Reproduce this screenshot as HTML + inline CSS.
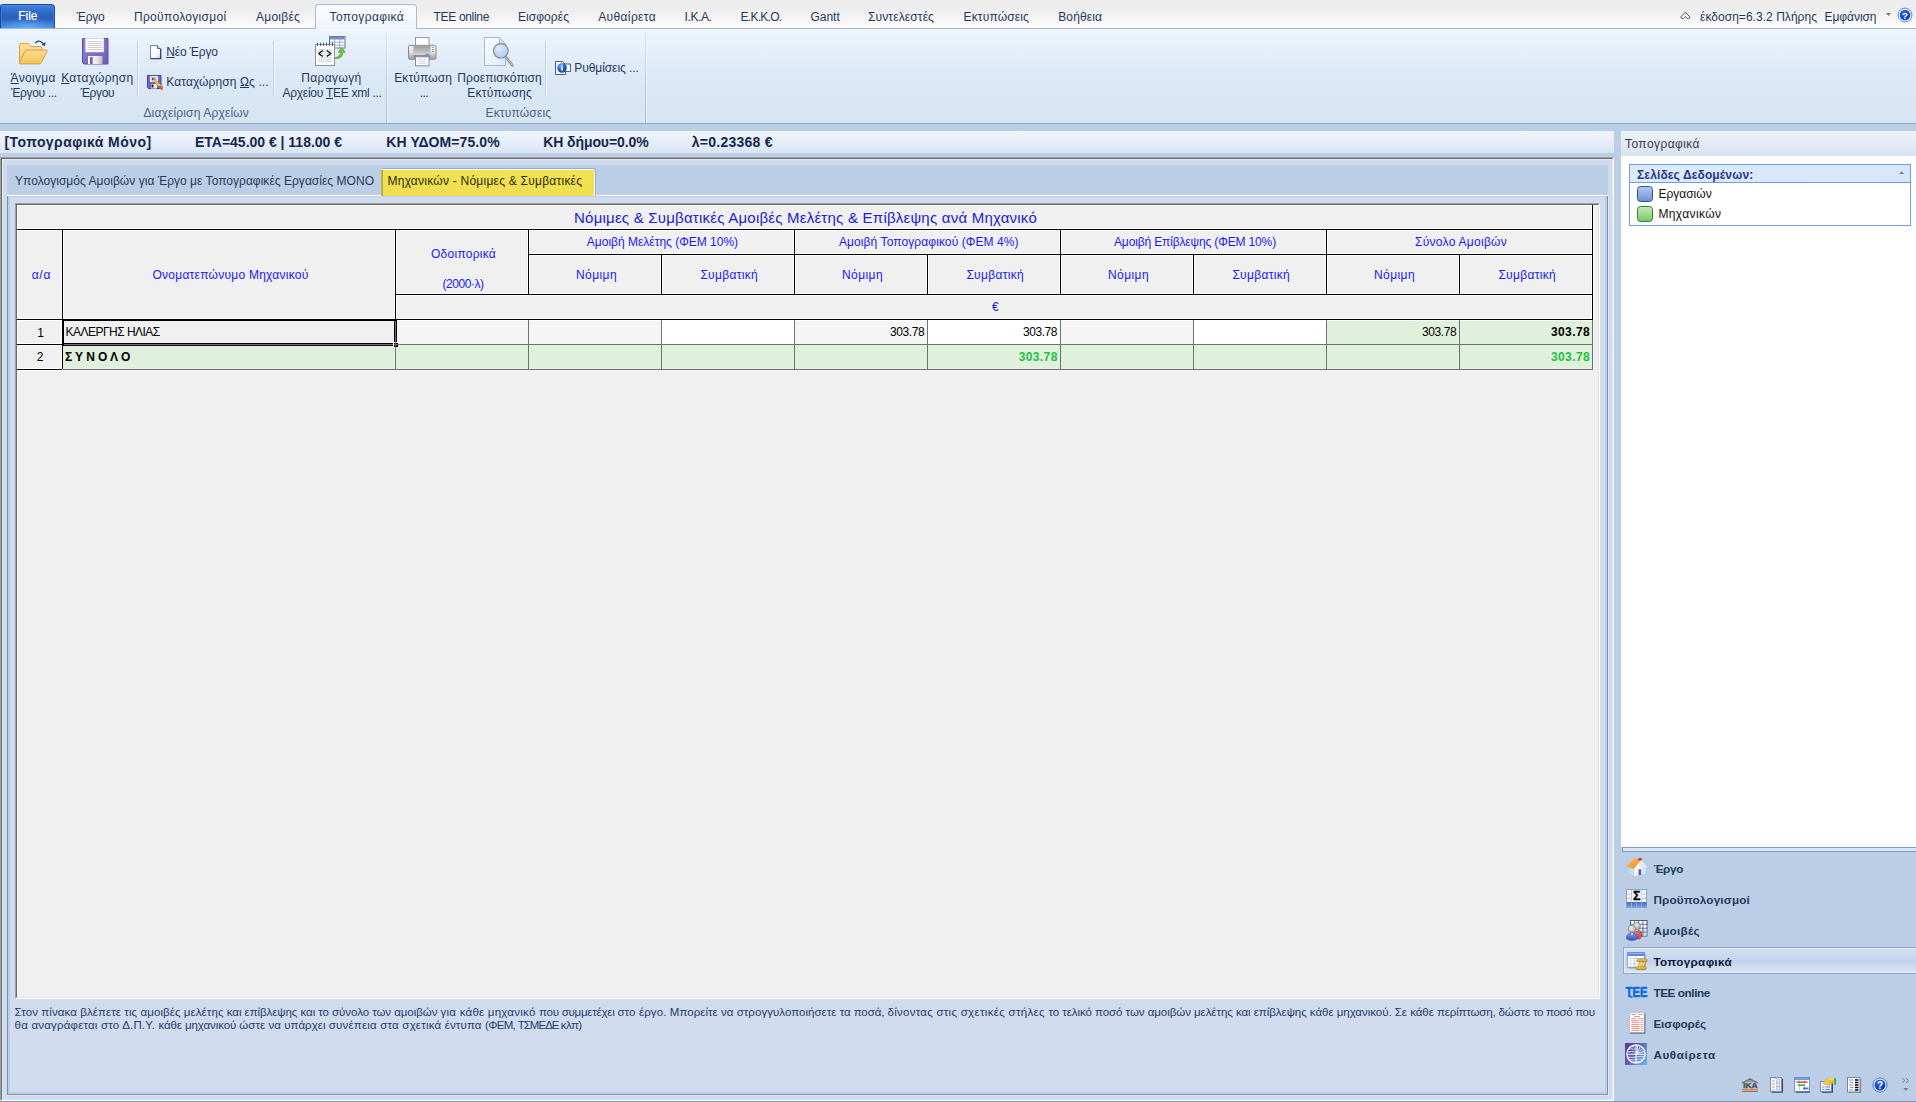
<!DOCTYPE html>
<html lang="el"><head><meta charset="utf-8"><title>Τοπογραφικά</title>
<style>

html,body{margin:0;padding:0;background:#bbcee6;}
body{width:1916px;height:1102px;overflow:hidden;font-family:"Liberation Sans",sans-serif;}
#app{position:relative;width:1916px;height:1102px;overflow:hidden;background:#bbcee6;}
#app div,#app svg{position:absolute;box-sizing:border-box;}
.t{position:absolute;white-space:pre;line-height:20px;height:20px;display:block;}
u{text-decoration:underline;text-underline-offset:1px;}
</style></head>
<body>
<div id="app">
<div style="left:0px;top:0px;width:1916px;height:28px;background:linear-gradient(#ededed 0,#eeeeee 40%,#f4f4f4 62%,#fafafa 92%,#ffffff 100%);"></div>
<div style="left:0px;top:28px;width:1916px;height:1px;background:#a0b4cf;"></div>
<div style="left:0px;top:29px;width:1916px;height:94px;background:linear-gradient(#f4f9ff 0,#edf4fd 1.5%,#e3edf9 30%,#dae7f5 58%,#d7e4f2 100%);"></div>
<div style="left:0px;top:123px;width:1916px;height:1px;background:#8fa6c5;"></div>
<div style="left:0px;top:124px;width:1916px;height:7px;background:#bbcee6;"></div>
<div style="left:0px;top:4px;width:55px;height:24px;border-radius:3px 4px 0 0;border:1px solid #1c48a8;border-bottom:none;background:radial-gradient(ellipse 70% 45% at 50% 100%,rgba(110,190,255,.75),rgba(110,190,255,0) 100%),linear-gradient(#4a8ee8 0,#3f7ddb 6%,#3170cf 25%,#2b62bb 45%,#2a60b8 62%,#3274d4 85%,#3c86e4 100%);box-shadow:inset 1px 0 0 #3f7fdc,inset -1px 0 0 #3f7fdc;"></div>
<div style="left:315px;top:4px;width:102px;height:25px;border-radius:4px 4px 0 0;border:1px solid #a7bbd6;border-bottom:none;background:linear-gradient(#fbfcfe 0,#f0f5fc 100%);"></div>
<div style="left:316px;top:28px;width:100px;height:1px;background:#eef3fb;"></div>
<div style="left:137px;top:41px;width:1px;height:55px;background:#c3d0e2;"></div>
<div style="left:138px;top:41px;width:1px;height:55px;background:#f3f7fc;"></div>
<div style="left:273px;top:41px;width:1px;height:55px;background:#c3d0e2;"></div>
<div style="left:274px;top:41px;width:1px;height:55px;background:#f3f7fc;"></div>
<div style="left:545px;top:41px;width:1px;height:55px;background:#c3d0e2;"></div>
<div style="left:546px;top:41px;width:1px;height:55px;background:#f3f7fc;"></div>
<div style="left:386px;top:31px;width:1px;height:92px;background:linear-gradient(#dfe8f4 0,#b6c6dc 60%,#aebfd8 100%);"></div>
<div style="left:387px;top:31px;width:1px;height:92px;background:linear-gradient(#f4f8fd 0,#eaf0f9 100%);"></div>
<div style="left:645px;top:31px;width:1px;height:92px;background:linear-gradient(#dfe8f4 0,#b6c6dc 60%,#aebfd8 100%);"></div>
<div style="left:646px;top:31px;width:1px;height:92px;background:linear-gradient(#f4f8fd 0,#eaf0f9 100%);"></div>
<div style="left:0px;top:131px;width:1614px;height:22px;background:linear-gradient(#eff5fd 0,#e7eff9 45%,#dae5f3 100%);"></div>
<div style="left:0px;top:157px;width:1614px;height:944px;background:#d0dcee;border:1px solid;border-color:#a0a0a0 #fff #fff #a0a0a0;"></div>
<div style="left:1px;top:158px;width:1612px;height:942px;border:1px solid;border-color:#696969 #e3e3e3 #e3e3e3 #696969;"></div>
<div style="left:2px;top:159px;width:1610px;height:1px;background:#dde8f8;"></div>
<div style="left:2px;top:159px;width:1px;height:940px;background:#dde8f8;"></div>
<div style="left:0px;top:1101px;width:1916px;height:1px;background:#7b95b9;"></div>
<div style="left:7px;top:165px;width:1601px;height:30px;background:#bbcee6;"></div>
<div style="left:7px;top:195px;width:1601px;height:1px;background:#fff;"></div>
<div style="left:7px;top:196px;width:1601px;height:899px;background:#d0dcee;border:1px solid #7590b5;border-top:none;box-shadow:inset 2px 0 0 #bbcee6,inset -2px 0 0 #bbcee6,inset 0 -2px 0 #bbcee6,inset 0 1px 0 #bbcee6;"></div>
<div style="left:1608px;top:196px;width:1px;height:900px;background:#dde7f5;"></div>
<div style="left:7px;top:1095px;width:1602px;height:1px;background:#dde7f5;"></div>
<div style="left:383px;top:168px;width:213px;height:28px;background:#fff;border:1px solid #98adca;border-left:none;border-bottom:none;border-radius:0 3px 0 0;"></div>
<div style="left:381px;top:170px;width:213px;height:26px;background:linear-gradient(#f2e252 0,#efdf50 100%);"></div>
<div style="left:381px;top:170px;width:2px;height:26px;background:linear-gradient(90deg,#cfc544,#a8a037);"></div>
<div style="left:381px;top:169px;width:2px;height:1px;background:#d8d6a0;"></div>
<div style="left:15px;top:203px;width:1585px;height:796px;background:#f0f0f0;border:1px solid;border-color:#a0a0a0 #fff #fff #a0a0a0;"></div>
<div style="left:16px;top:204px;width:1583px;height:794px;border:1px solid;border-color:#696969 #e3e3e3 #e3e3e3 #696969;"></div>
<div style="left:17px;top:205px;width:1581px;height:1px;background:#fff;"></div>
<div style="left:17px;top:205px;width:1px;height:792px;background:#fff;"></div>
<div style="left:396px;top:320px;width:1197px;height:24px;background:#f5f5f5;"></div>
<div style="left:662px;top:320px;width:132px;height:24px;background:#fff;"></div>
<div style="left:928px;top:320px;width:132px;height:24px;background:#fff;"></div>
<div style="left:1194px;top:320px;width:132px;height:24px;background:#fff;"></div>
<div style="left:1327px;top:320px;width:265px;height:24px;background:#dff0dc;"></div>
<div style="left:63px;top:345px;width:1529px;height:24px;background:#dff0dc;"></div>
<div style="left:17px;top:228px;width:1576px;height:3px;background:#fff;"></div>
<div style="left:528px;top:253px;width:1065px;height:3px;background:#fff;"></div>
<div style="left:395px;top:293px;width:1198px;height:3px;background:#fff;"></div>
<div style="left:17px;top:318px;width:1576px;height:3px;background:#fff;"></div>
<div style="left:61px;top:229px;width:3px;height:140px;background:#fff;"></div>
<div style="left:394px;top:229px;width:3px;height:91px;background:#fff;"></div>
<div style="left:1591px;top:205px;width:3px;height:115px;background:#fff;"></div>
<div style="left:527px;top:229px;width:3px;height:65px;background:#fff;"></div>
<div style="left:793px;top:229px;width:3px;height:65px;background:#fff;"></div>
<div style="left:1059px;top:229px;width:3px;height:65px;background:#fff;"></div>
<div style="left:1325px;top:229px;width:3px;height:65px;background:#fff;"></div>
<div style="left:660px;top:254px;width:3px;height:40px;background:#fff;"></div>
<div style="left:926px;top:254px;width:3px;height:40px;background:#fff;"></div>
<div style="left:1192px;top:254px;width:3px;height:40px;background:#fff;"></div>
<div style="left:1458px;top:254px;width:3px;height:40px;background:#fff;"></div>
<div style="left:17px;top:343px;width:45px;height:3px;background:#fff;"></div>
<div style="left:17px;top:368px;width:45px;height:3px;background:#fff;"></div>
<div style="left:17px;top:229px;width:1576px;height:1px;background:#000;"></div>
<div style="left:528px;top:254px;width:1065px;height:1px;background:#000;"></div>
<div style="left:395px;top:294px;width:1198px;height:1px;background:#000;"></div>
<div style="left:17px;top:319px;width:1576px;height:1px;background:#000;"></div>
<div style="left:62px;top:229px;width:1px;height:140px;background:#000;"></div>
<div style="left:395px;top:229px;width:1px;height:91px;background:#000;"></div>
<div style="left:1592px;top:205px;width:1px;height:115px;background:#000;"></div>
<div style="left:528px;top:229px;width:1px;height:65px;background:#000;"></div>
<div style="left:794px;top:229px;width:1px;height:65px;background:#000;"></div>
<div style="left:1060px;top:229px;width:1px;height:65px;background:#000;"></div>
<div style="left:1326px;top:229px;width:1px;height:65px;background:#000;"></div>
<div style="left:661px;top:254px;width:1px;height:40px;background:#000;"></div>
<div style="left:927px;top:254px;width:1px;height:40px;background:#000;"></div>
<div style="left:1193px;top:254px;width:1px;height:40px;background:#000;"></div>
<div style="left:1459px;top:254px;width:1px;height:40px;background:#000;"></div>
<div style="left:17px;top:344px;width:45px;height:1px;background:#000;"></div>
<div style="left:17px;top:369px;width:45px;height:1px;background:#000;"></div>
<div style="left:63px;top:344px;width:1530px;height:1px;background:#727272;"></div>
<div style="left:63px;top:369px;width:1530px;height:1px;background:#727272;"></div>
<div style="left:395px;top:320px;width:1px;height:50px;background:#727272;"></div>
<div style="left:528px;top:320px;width:1px;height:50px;background:#727272;"></div>
<div style="left:661px;top:320px;width:1px;height:50px;background:#727272;"></div>
<div style="left:794px;top:320px;width:1px;height:50px;background:#727272;"></div>
<div style="left:927px;top:320px;width:1px;height:50px;background:#727272;"></div>
<div style="left:1060px;top:320px;width:1px;height:50px;background:#727272;"></div>
<div style="left:1193px;top:320px;width:1px;height:50px;background:#727272;"></div>
<div style="left:1326px;top:320px;width:1px;height:50px;background:#727272;"></div>
<div style="left:1459px;top:320px;width:1px;height:50px;background:#727272;"></div>
<div style="left:1592px;top:320px;width:1px;height:50px;background:#727272;"></div>
<div style="left:62px;top:319px;width:335px;height:2px;background:#000;"></div>
<div style="left:62px;top:319px;width:2px;height:27px;background:#000;"></div>
<div style="left:63px;top:346px;width:1px;height:23px;background:#dff0dc;"></div>
<div style="left:394px;top:321px;width:1px;height:21px;background:#000;"></div>
<div style="left:396px;top:321px;width:1px;height:21px;background:#000;"></div>
<div style="left:64px;top:343px;width:329px;height:1px;background:#000;"></div>
<div style="left:64px;top:345px;width:329px;height:1px;background:#1a0a1a;"></div>
<div style="left:394px;top:343px;width:4px;height:4px;background:#000;"></div>
<div style="left:395px;top:343px;width:1px;height:4px;background:#6a6a6a;"></div>
<div style="left:394px;top:344px;width:4px;height:1px;background:#6a6a6a;"></div>
<div style="left:393px;top:342px;width:1px;height:4px;background:#f4f4f4;"></div>
<div style="left:1621px;top:131px;width:295px;height:25px;background:linear-gradient(#ecf2fb 0,#e2eaf6 50%,#d8e3f2 100%);"></div>
<div style="left:1621px;top:156px;width:295px;height:691px;background:#fff;"></div>
<div style="left:1629px;top:164px;width:282px;height:62px;border:1px solid #6f9de0;background:#fff;"></div>
<div style="left:1630px;top:165px;width:280px;height:18px;background:linear-gradient(90deg,#deeafc 0,#d7e6fc 100%);border-bottom:1px solid #6f9de0;"></div>
<div style="left:1637px;top:186px;width:16px;height:16px;border-radius:3.5px;border:1px solid #2c4f9c;background:linear-gradient(#b3c6ec 0,#6e92d6 100%);"></div>
<div style="left:1637px;top:206px;width:16px;height:16px;border-radius:3.5px;border:1px solid #357f31;background:linear-gradient(#c4e8bc 0,#79c96f 100%);"></div>
<div style="left:1622px;top:847px;width:295px;height:5px;background:#d6e5f8;border:1px solid #7f9bc4;border-right:none;"></div>
<div style="left:1621px;top:852px;width:295px;height:249px;background:#bbcee6;"></div>
<div style="left:1623px;top:947px;width:295px;height:27px;border:1px solid #8ea9cf;border-right:none;background:linear-gradient(#d3e0f2 0,#c6d6ec 45%,#c0d1e8 50%,#dbe6f4 100%);box-shadow:inset 0 0 0 1px #e4ecf8;"></div>
<svg style="left:14px;top:36px" width="38" height="32" viewBox="14 36 38 32"><defs><linearGradient id="fo1" x1="0" y1="0" x2="0" y2="1"><stop offset="0" stop-color="#fbe59a"/><stop offset="1" stop-color="#f3c95f"/></linearGradient>
<linearGradient id="fo2" x1="0" y1="0" x2="0" y2="1"><stop offset="0" stop-color="#fddc8e"/><stop offset="1" stop-color="#f6c558"/></linearGradient></defs>
<path d="M19.5 62.5V45.2q0-1.7 1.7-1.7h7.3l2.2 3h9.6q1.7 0 1.7 1.7v3.3" fill="url(#fo1)" stroke="#d9a04a"/>
<path d="M19.3 62.6l5.6-11.4q.6-1.2 2-1.2h19.4q1.4 0 .8 1.3l-6 11.6q-.5 1-1.8 1H20.300q-1.600 0-1-1.300z" fill="url(#fo2)" stroke="#dc9a3c"/>
<path d="M35.2 43.3q2.600-3.400 6.200-1.200 2.100 1.300 2.700 3.200" fill="none" stroke="#2f4569" stroke-width="1.2"/>
<path d="M41.4 44.700l3.600 1.400.6-4.100z" fill="#2f4569"/>
</svg>
<svg style="left:80px;top:36px" width="32" height="32" viewBox="80 36 32 32"><defs><linearGradient id="fl1" x1="0" y1="0" x2="1" y2="1"><stop offset="0" stop-color="#8f82cc"/><stop offset="1" stop-color="#6e5fb6"/></linearGradient>
<linearGradient id="fl2" x1="0" y1="0" x2="1" y2="0"><stop offset="0" stop-color="#fff"/><stop offset=".6" stop-color="#e9e9e9"/><stop offset="1" stop-color="#bdbdbd"/></linearGradient></defs>
<path d="M82.500 38.500h25.500v25.500h-24l-1.500-1.500z" fill="url(#fl1)" stroke="#5d4fa3"/>
<rect x="85.500" y="38.300" width="18.300" height="13.700" fill="#fff" stroke="#d8d4ea" stroke-width=".6"/>
<path d="M87.500 41.500h15M87.500 43.500h15M87.500 45.500h15M87.500 47.500h15M87.500 49.500h15" stroke="#c9c9c9" stroke-width=".9"/>
<rect x="88" y="56" width="14.500" height="8" fill="url(#fl2)"/>
<rect x="90" y="57" width="2.600" height="7" fill="#6f5fb5"/>
<rect x="105.600" y="40" width="1" height="1.500" fill="#5d4fa3"/>
</svg>
<svg style="left:148px;top:43px" width="16" height="18" viewBox="148 43 16 18"><defs><linearGradient id="nd1" x1="0" y1="0" x2="1" y2="1"><stop offset="0" stop-color="#fff"/><stop offset=".6" stop-color="#fbfcff"/><stop offset="1" stop-color="#c9d2e4"/></linearGradient></defs>
<path d="M150.500 45.500h7l3 3v10h-10z" fill="url(#nd1)" stroke="#5d6b88" stroke-width=".8"/>
<path d="M157.500 45.500v3h3" fill="#e8ecf4" stroke="#33466c" stroke-width=".8"/>
<path d="M150.600 58.700h10.200v-9.700" fill="none" stroke="#26375c" stroke-width="1.100"/>
</svg>
<svg style="left:145px;top:73px" width="20" height="18" viewBox="145 73 20 18">
<path d="M147.500 75.500h13.500v13h-12.500l-1-1z" fill="#6b63d6" stroke="#4a43a8"/>
<rect x="150" y="76" width="8" height="6" fill="#fff"/>
<path d="M151 77.500h6M151 79.500h6" stroke="#999" stroke-width=".8"/>
<rect x="151" y="84" width="6" height="4.500" fill="#e8e8e8"/>
<rect x="151.500" y="84.500" width="2" height="3" fill="#222"/>
<path d="M152.500 80.200l2-1.600 8.600 8.400-1.800 1.900z" fill="#e9c74a" stroke="#8a6a20" stroke-width=".5"/>
<path d="M160.300 85.600l2.600 2.500q.6.900-.4 1.400-1 .5-1.700-.1l-2.300-2.300z" fill="#d4533c"/>
<path d="M152.500 80.200l2-1.600-2.700-.700z" fill="#333"/>
</svg>
<svg style="left:313px;top:34px" width="36" height="34" viewBox="313 34 36 34">
<rect x="329.500" y="36.500" width="15.500" height="11.500" fill="#fff" stroke="#6678a8"/>
<rect x="330" y="37" width="14.500" height="2.500" fill="#6f8fd0"/>
<path d="M334.700 37v11M339.800 37v11M330 42.300h15M330 45.200h15" stroke="#8c9ac0" stroke-width=".8"/>
<rect x="315.500" y="44.500" width="19" height="21" fill="#fff" stroke="#8793ad"/>
<path d="M318 49.500h14M318 51.500h14M318 53.500h14M318 55.500h14M318 57.500h14M318 59.500h14M318 61.500h14" stroke="#c7cfe0" stroke-width=".8"/>
<path d="M317.500 42.800v3M320.500 42.800v3M323.500 42.800v3M326.500 42.800v3M329.500 42.800v3M332.500 42.800v3" stroke="#444" stroke-width=".9"/>
<path d="M322.800 50.600l-4 3 4 3M326.800 50.600l4 3-4 3" fill="none" stroke="#111" stroke-width="1.300"/>
<path d="M335.200 57.500q4.800-.3 5.300-5.200l-2.400 0 3.600-4.800 3.600 4.800-2.300 0q-.4 6.900-7.800 6.300z" fill="#6cc63a" stroke="#4a9a22" stroke-width=".6"/>
</svg>
<svg style="left:406px;top:35px" width="34" height="34" viewBox="406 35 34 34"><defs><linearGradient id="pr1" x1="0" y1="0" x2="0" y2="1"><stop offset="0" stop-color="#f4f4f4"/><stop offset=".55" stop-color="#dcdcdc"/><stop offset="1" stop-color="#9c9c9c"/></linearGradient>
<linearGradient id="pr2" x1="0" y1="0" x2="0" y2="1"><stop offset="0" stop-color="#9e9e9e"/><stop offset="1" stop-color="#d4d4d4"/></linearGradient></defs>
<rect x="415.500" y="37.500" width="13.500" height="9" fill="#fff" stroke="#8d9bb5"/>
<rect x="408.500" y="45.300" width="27.500" height="14" rx="1.500" fill="url(#pr1)" stroke="#8a8a8a"/>
<rect x="413.500" y="46" width="17" height="9" fill="url(#pr2)"/>
<rect x="413.500" y="55" width="17" height="2.500" fill="#8f8f8f"/>
<rect x="425" y="53.800" width="4" height="1.200" fill="#4da0ff"/>
<path d="M432 47.500h2M432 49.500h2M432 51.500h2" stroke="#9a9a9a" stroke-width=".8"/>
<rect x="415.500" y="56.800" width="13.500" height="9" fill="#fff" stroke="#7f8eac"/>
<path d="M418 59.500h8.500M418 61.500h8.500M418 63.500h8.500" stroke="#c8cfdd" stroke-width=".8"/>
</svg>
<svg style="left:482px;top:35px" width="34" height="34" viewBox="482 35 34 34"><defs><linearGradient id="pv1" x1="0" y1="0" x2="1" y2="1"><stop offset="0" stop-color="#fdfeff"/><stop offset="1" stop-color="#dde8f8"/></linearGradient>
<radialGradient id="pv2" cx=".4" cy=".35" r=".7"><stop offset="0" stop-color="#dcebfd"/><stop offset="1" stop-color="#a9cbf3"/></radialGradient></defs>
<path d="M484.500 37.500h15l6 6v22h-21z" fill="url(#pv1)" stroke="#a8b6cf"/>
<path d="M499.500 37.500v6h6z" fill="#cfdff6" stroke="#a8b6cf" stroke-width=".8"/>
<path d="M505 56l7.500 9.500" stroke="#8a8a8a" stroke-width="2.600" stroke-linecap="round"/>
<path d="M505 56l7.500 9.500" stroke="#cfcfcf" stroke-width="1" stroke-linecap="round"/>
<circle cx="500.800" cy="50.800" r="7.300" fill="url(#pv2)" stroke="#8e8e8e" stroke-width="1.250"/>
</svg>
<svg style="left:553px;top:59px" width="20" height="18" viewBox="553 59 20 18"><defs><radialGradient id="st1" cx=".35" cy=".3" r=".8"><stop offset="0" stop-color="#6fb0ff"/><stop offset=".5" stop-color="#1e62d8"/><stop offset="1" stop-color="#0b3a9c"/></radialGradient></defs>
<path d="M555.500 61.500h7l2.500 2.500h5.500v7.500h-5v3h-10z" fill="#fff" stroke="#3c4a68" stroke-width=".9"/>
<circle cx="562" cy="68" r="4.800" fill="url(#st1)"/>
<rect x="561.300" y="66.800" width="1.500" height="3.800" fill="#fff"/><rect x="561.300" y="64.800" width="1.500" height="1.400" fill="#fff"/>
</svg>
<svg style="left:1678px;top:9px" width="14" height="13" viewBox="1678 9 14 13"><path d="M1685.400 12.200l4.200 4.400q.600 1.800-1.300 1.900-1.300.100-1.800-.700l-1.100-1.300-1.100 1.300q-.500.800-1.800.700-1.900-.100-1.300-1.900z" fill="#fff" stroke="#3b4350" stroke-width=".95" stroke-linejoin="round"/></svg>
<svg style="left:1884px;top:11px" width="10" height="8" viewBox="1884 11 10 8"><path d="M1885.800 13.900h5.400l-2.700 3z" fill="#fff"/><path d="M1885.800 12.900h5.400l-2.700 3z" fill="#777"/></svg>
<svg style="left:1896px;top:6px" width="18" height="18" viewBox="1896 6 18 18"><defs><radialGradient id="hp1" cx=".4" cy=".3" r=".8"><stop offset="0" stop-color="#2b6cf5"/><stop offset=".6" stop-color="#1148d0"/><stop offset="1" stop-color="#0a2fa0"/></radialGradient></defs><circle cx="1905" cy="15" r="6.900" fill="#fff" stroke="#3f7ad0" stroke-width=".9"/>
<circle cx="1905" cy="15" r="5.300" fill="url(#hp1)"/>
<text x="1905" y="18.500" text-anchor="middle" font-family="Liberation Sans,sans-serif" font-weight="700" font-size="9.800" fill="#fff">?</text></svg>
<svg style="left:1624px;top:856px" width="26" height="24" viewBox="1624 856 26 24"><defs><linearGradient id="hs0" x1="0" y1="0" x2="1" y2="1"><stop offset="0" stop-color="#a9d4f7"/><stop offset="1" stop-color="#d6e9fb"/></linearGradient>
<linearGradient id="hs1" x1="0" y1="0" x2="1" y2="0"><stop offset="0" stop-color="#ffffff"/><stop offset="1" stop-color="#d3e2f5"/></linearGradient>
<linearGradient id="hs2" x1="0" y1="0" x2="1" y2="1"><stop offset="0" stop-color="#ffc24d"/><stop offset="1" stop-color="#f58a1f"/></linearGradient></defs>
<path d="M1626.900 866.900l7.200 2.200v7.200l-6.900-4.400z" fill="url(#hs0)" stroke="#a9c2e2" stroke-width=".5"/>
<path d="M1640.700 860.500l-6.600 8.400v7.400l11.900-2.500.3-6.600z" fill="url(#hs1)" stroke="#b9c6dc" stroke-width=".5"/>
<path d="M1626.200 866.400l8.200-7.900 6.900.3-7.500 9.700z" fill="url(#hs2)"/>
<path d="M1640.700 859.600l6.300 7-1 1-5.600-6.200z" fill="#e9edf5" opacity=".9"/>
<rect x="1638.600" y="858.100" width="3.200" height="2.300" fill="#d42a1c"/>
<rect x="1638.500" y="869.300" width="2.700" height="5.600" fill="#6d5aa6"/>
</svg>
<svg style="left:1624px;top:887px" width="26" height="24" viewBox="1624 887 26 24"><defs><linearGradient id="sg1" x1="0" y1="0" x2="0" y2="1"><stop offset="0" stop-color="#3f66bd"/><stop offset="1" stop-color="#7f9fe0"/></linearGradient></defs>
<rect x="1626.500" y="889.500" width="20" height="18" fill="#f4f7fc" stroke="#8aa0c4"/>
<path d="M1631.500 890v18M1636.500 890v18M1641.500 890v18M1627 894h19.500M1627 898.500h19.500M1627 903h19.500" stroke="#b7c5dd" stroke-width=".9"/>
<rect x="1627" y="902" width="19.500" height="5.500" fill="url(#sg1)"/>
<path d="M1631.500 902v5.500M1636.500 902v5.500M1641.500 902v5.500" stroke="#9bb4e4" stroke-width=".8"/>
<rect x="1632" y="890" width="9.500" height="10.500" fill="#eef2fa"/>
<text x="1636.700" y="899.800" text-anchor="middle" font-family="Liberation Sans,sans-serif" font-weight="700" font-size="12.500" fill="#000" stroke="#000" stroke-width=".3">Σ</text>
</svg>
<svg style="left:1624px;top:918px" width="26" height="25" viewBox="1624 918 26 25"><defs><radialGradient id="pp1" cx=".4" cy=".35" r=".75"><stop offset="0" stop-color="#f6f6f6"/><stop offset="1" stop-color="#9b9b9b"/></radialGradient>
<linearGradient id="pp2" x1="0" y1="0" x2="0" y2="1"><stop offset="0" stop-color="#7d9be8"/><stop offset="1" stop-color="#3552b8"/></linearGradient>
<linearGradient id="pp3" x1="0" y1="0" x2="1" y2="1"><stop offset="0" stop-color="#ef7f7f"/><stop offset="1" stop-color="#c93338"/></linearGradient></defs>
<rect x="1630.500" y="920.500" width="16.500" height="15.500" fill="#fff" stroke="#3d4c6e" stroke-width=".9"/>
<rect x="1639" y="928.500" width="7.500" height="7" fill="#cfe4fb"/>
<path d="M1634.600 921v15M1638.700 921v15M1642.900 921v15M1631 924.300h16M1631 928.200h16M1631 932.100h16" stroke="#4a5a7e" stroke-width=".8"/>
<circle cx="1637" cy="926" r="3.500" fill="url(#pp1)" stroke="#7d7d7d" stroke-width=".6"/>
<path d="M1636 931.200q3.500-1.700 5.200.8 1.300 2.300.6 5l-2.600 2.200-3.700-1.500z" fill="url(#pp3)" stroke="#a22d32" stroke-width=".5"/>
<circle cx="1632" cy="929" r="3.800" fill="url(#pp1)" stroke="#7d7d7d" stroke-width=".6"/>
<path d="M1626.200 938.500q.3-5.300 5.800-5.500 5.500.2 5.800 5.500-1.600 2-5.800 2t-5.800-2z" fill="url(#pp2)" stroke="#2b46a0" stroke-width=".5"/>
<path d="M1630.800 933.200l1.200 2.300 1.200-2.300z" fill="#fff"/>
</svg>
<svg style="left:1624px;top:949px" width="26" height="25" viewBox="1624 949 26 25"><defs><linearGradient id="sc1" x1="0" y1="0" x2="1" y2="1"><stop offset="0" stop-color="#fff0a0"/><stop offset="1" stop-color="#e3ae34"/></linearGradient>
<linearGradient id="sc2" x1="0" y1="0" x2="0" y2="1"><stop offset="0" stop-color="#fbd968"/><stop offset="1" stop-color="#c98f1e"/></linearGradient></defs>
<rect x="1627.500" y="952.500" width="17" height="15" fill="#fff" stroke="#8c9cbd" stroke-width=".9"/>
<path d="M1645.200 954v14.200h-16.500" fill="none" stroke="#5b6a88" stroke-width=".7" opacity=".6"/>
<rect x="1627.500" y="952.300" width="17" height="3.700" fill="#5684e6"/>
<rect x="1628.300" y="953" width="15.500" height="1.200" fill="#8fb0f3"/>
<path d="M1629.500 958.500h2M1633 958.500h5M1639.500 958.500h3.500M1629.500 961h2M1633 961h4.500M1629.500 963.500h2M1633 963.500h3.500M1629.500 966h2M1633 966h3" stroke="#9aabcc" stroke-width=".8"/>
<path d="M1640 961.300h6.300l-2.800 6.500h-6.300z" fill="url(#sc1)" stroke="#9a7016" stroke-width=".5"/>
<rect x="1637" y="958.900" width="10.300" height="2.900" rx="1.400" fill="url(#sc2)" stroke="#8a6514" stroke-width=".5"/>
<rect x="1635.900" y="966.700" width="10.300" height="3" rx="1.400" fill="url(#sc2)" stroke="#8a6514" stroke-width=".5"/>
</svg>
<svg style="left:1624px;top:984px" width="26" height="16" viewBox="1624 984 26 16"><text x="1625.700" y="997.400" font-family="Liberation Sans,sans-serif" font-weight="700" font-size="14.600" fill="#0f6ae0" stroke="#0f6ae0" stroke-width=".7" textLength="21.600" lengthAdjust="spacingAndGlyphs">ΤΕΕ</text><path d="M1630 995.500q.2 1.800 2.400 1.600" fill="none" stroke="#0f6ae0" stroke-width="1.600"/></svg>
<svg style="left:1626px;top:1010px" width="22" height="26" viewBox="1626 1010 22 26">
<rect x="1629.500" y="1012.500" width="14.800" height="20" fill="#fff" stroke="#b4b9c4" stroke-width=".8"/>
<path d="M1644.900 1013.500v19.700h-14.600" fill="none" stroke="#44536f" stroke-width="1" opacity=".8"/>
<path d="M1631.300 1014.500h4.500" stroke="#7aa6e0" stroke-width="1"/>
<path d="M1638 1014.500h5M1634 1016.500h6M1631.300 1018.500h4.700M1638 1018.500h5M1631.300 1020.500h8M1640.500 1020.500h2.500M1631.300 1022.500h8M1640.500 1022.500h2.500M1631.300 1024.500h8M1640.500 1024.500h2.500M1631.300 1026.500h8M1640.500 1026.500h2.500M1631.300 1028.500h8M1640.500 1028.500h2.500M1631.300 1030.500h8M1640.500 1030.500h2.500" stroke="#f7938c" stroke-width="1"/>
</svg>
<svg style="left:1625px;top:1043px" width="22" height="22" viewBox="1625 1043 22 22"><defs><linearGradient id="gl1" x1="0" y1="0.200" x2="1" y2=".8"><stop offset="0" stop-color="#573a99"/><stop offset=".5" stop-color="#5b68be"/><stop offset="1" stop-color="#62b4ea"/></linearGradient></defs>
<rect x="1625" y="1043" width="22" height="22" fill="url(#gl1)"/>
<circle cx="1636" cy="1054" r="9.200" fill="none" stroke="#fff" stroke-width="1.200"/>
<path d="M1636 1045v18M1627 1054.300h18" stroke="#fff" stroke-width="1.100"/>
<path d="M1636 1054l2-8.600M1636 1054l4.500-7.600M1636 1054l6.800-5.600M1636 1054l8.400-2.800" stroke="#fff" stroke-width=".9"/>
<path d="M1628.500 1049.500q2.500-1.500 4-.5t2.500-.500M1629.500 1047q2.500-1 5 0M1627.800 1052q3.500-1 7 0" fill="none" stroke="#fff" stroke-width=".8"/>
<path d="M1627.500 1057q4 1 8.500 0t8.500 0M1628.500 1059.500q4 1 7.500 0t7.500 0M1630.500 1061.800q3 .8 5.500 0t5.500 0" fill="none" stroke="#fff" stroke-width=".8"/>
</svg>
<svg style="left:1740px;top:1076px" width="20" height="18" viewBox="1740 1076 20 18">
<path d="M1741.800 1082.400l8.200-4.200 8.200 4.200v1.300l-8.200-3.600-8.200 3.600z" fill="#6a6a6a"/>
<path d="M1745 1081.900l5-2.200 5 2.200z" fill="#9a9a9a"/>
<text x="1743.200" y="1088" font-family="Liberation Sans,sans-serif" font-weight="700" font-size="6.600" fill="#5c5c5c" stroke="#5c5c5c" stroke-width=".5" textLength="14.500" lengthAdjust="spacingAndGlyphs">IKA</text>
<rect x="1742" y="1088.900" width="16" height="1.400" fill="#f58220"/><rect x="1742" y="1090.900" width="16" height="1" fill="#6f6f6f"/>
</svg>
<svg style="left:1768px;top:1076px" width="16" height="18" viewBox="1768 1076 16 18">
<path d="M1771.500 1092.300h11v-13.500" fill="none" stroke="#3a4f70" stroke-width="1.100"/>
<rect x="1770.500" y="1077.500" width="11" height="14" fill="#fdfdff" stroke="#6d84a6" stroke-width=".9"/>
<path d="M1773.500 1078.200h5" stroke="#9aa9c2" stroke-width=".8"/>
<path d="M1772 1081h3M1772 1084h3M1772 1087h3M1772 1090h3" stroke="#9aa5ba" stroke-width=".9"/>
<path d="M1776.800 1079.700h3v10.300h-3zM1776.800 1083h3M1776.800 1086.500h3" fill="#f2f5fb" stroke="#8e9bb5" stroke-width=".7"/>
</svg>
<svg style="left:1792px;top:1075px" width="20" height="18" viewBox="1792 1075 20 18">
<rect x="1794.500" y="1077.500" width="15" height="14" fill="#fff" stroke="#7f95c8"/>
<rect x="1794.500" y="1077" width="15" height="2.800" fill="#4a7fe8"/><rect x="1795.300" y="1077.700" width="13.400" height="1" fill="#8fb2f4"/><path d="M1795.500 1092.200h14.500" stroke="#2f4468" stroke-width="1"/>
<path d="M1799.500 1080v11.500M1804.500 1080v11.500" stroke="#b8c6e6" stroke-width=".8"/>
<rect x="1796.500" y="1081.300" width="11" height="1.600" fill="#e0523a"/>
<rect x="1797.800" y="1084.300" width="7" height="1.800" fill="#4caf50"/>
<rect x="1803" y="1087.500" width="5.500" height="1.800" fill="#3f74d8"/>
</svg>
<svg style="left:1818px;top:1075px" width="20" height="18" viewBox="1818 1075 20 18"><defs><linearGradient id="cd1" x1="0" y1="0" x2="1" y2="1"><stop offset="0" stop-color="#ffffff"/><stop offset="1" stop-color="#cfe0f8"/></linearGradient>
<linearGradient id="cd2" x1="0" y1="0" x2="0" y2="1"><stop offset="0" stop-color="#ffe45a"/><stop offset="1" stop-color="#e8a21c"/></linearGradient></defs>
<path d="M1821.700 1092.200h10.700v-9" fill="none" stroke="#2f4468" stroke-width="1.100"/>
<rect x="1820.500" y="1081.500" width="11" height="10" fill="url(#cd1)" stroke="#6f88b4" stroke-width=".9"/>
<path d="M1822.300 1087h2M1825.500 1087h4.500M1822.300 1089.500h2M1825.500 1089.500h4.500" stroke="#7f90b4" stroke-width="1"/>
<path d="M1822.500 1083.300l4.500-5 3.500 1 3 2.500-4.500 4z" fill="#e7c94e" stroke="#9a7d1e" stroke-width=".5" stroke-dasharray=".8 .5"/>
<path d="M1828.200 1078.600q3.300-1.500 6.300.300v3.600q-2.600 1.600-5 .300z" fill="url(#cd2)"/>
<rect x="1834.200" y="1078" width="1.700" height="6.800" fill="#3aa648"/>
</svg>
<svg style="left:1845px;top:1075px" width="18" height="18" viewBox="1845 1075 18 18">
<rect x="1847.500" y="1077.500" width="12.500" height="14.500" fill="#fff" stroke="#7a87a4"/>
<path d="M1849 1080h4.500M1850 1082.500h3.500M1849 1085h4.500M1850 1087.500h3.500M1849 1090h4.500" stroke="#7f9ad0" stroke-width="1"/>
<path d="M1855 1080h3.500M1855 1082.500h3.500M1855 1085h3.500M1855 1087.500h3.500M1855 1090h3.500" stroke="#000" stroke-width="1.500"/>
<path d="M1860.700 1079v13.700h-12" fill="none" stroke="#556" stroke-width=".7" opacity=".7"/>
</svg>
<svg style="left:1871px;top:1076px" width="18" height="18" viewBox="1871 1076 18 18"><defs><radialGradient id="hp2" cx=".4" cy=".3" r=".8"><stop offset="0" stop-color="#2b6cf5"/><stop offset=".6" stop-color="#1148d0"/><stop offset="1" stop-color="#0a2fa0"/></radialGradient></defs><circle cx="1880" cy="1085" r="7" fill="#fff" stroke="#2f62c0" stroke-width=".9"/>
<circle cx="1880" cy="1085" r="5.500" fill="url(#hp2)"/>
<text x="1880" y="1088.600" text-anchor="middle" font-family="Liberation Sans,sans-serif" font-weight="700" font-size="10" fill="#fff">?</text></svg>
<svg style="left:1900px;top:1076px" width="12" height="16" viewBox="1900 1076 12 16"><path d="M1902.300 1078.300l2.600 2.200-2.600 2.200M1906 1078.300l2.600 2.200-2.600 2.200" fill="none" stroke="#6f7f98" stroke-width="1"/><path d="M1903.300 1088h5l-2.500 2.800z" fill="#6f7f98"/></svg>
<svg style="left:1896px;top:168px" width="10" height="8" viewBox="1896 168 10 8"><path d="M1899.200 174.100l2.450-2.900 2.450 2.900z" fill="#777"/></svg>
<span class="t" style="left:18.3px;top:6.34px;font-size:12px;color:#fff;letter-spacing:-0.036px;text-shadow:0 0 1px rgba(255,255,255,.55);">File</span>
<span class="t" style="left:76.5px;top:6.84px;font-size:12px;color:#1e395b;letter-spacing:-0.230px;">Έργο</span>
<span class="t" style="left:134px;top:6.84px;font-size:12px;color:#1e395b;letter-spacing:0.314px;">Προϋπολογισμοί</span>
<span class="t" style="left:256px;top:6.84px;font-size:12px;color:#1e395b;letter-spacing:0.243px;">Αμοιβές</span>
<span class="t" style="left:329.5px;top:6.84px;font-size:12px;color:#1e395b;letter-spacing:0.381px;">Τοπογραφικά</span>
<span class="t" style="left:433.5px;top:6.84px;font-size:12px;color:#1e395b;letter-spacing:-0.320px;">TEE online</span>
<span class="t" style="left:518px;top:6.84px;font-size:12px;color:#1e395b;letter-spacing:0.062px;">Εισφορές</span>
<span class="t" style="left:598.25px;top:6.84px;font-size:12px;color:#1e395b;letter-spacing:0.358px;">Αυθαίρετα</span>
<span class="t" style="left:684.5px;top:6.84px;font-size:12px;color:#1e395b;letter-spacing:-0.391px;">Ι.Κ.Α.</span>
<span class="t" style="left:740.5px;top:6.84px;font-size:12px;color:#1e395b;letter-spacing:-0.711px;">Ε.Κ.Κ.Ο.</span>
<span class="t" style="left:810.5px;top:6.84px;font-size:12px;color:#1e395b;letter-spacing:-0.022px;">Gantt</span>
<span class="t" style="left:868px;top:6.84px;font-size:12px;color:#1e395b;letter-spacing:0.118px;">Συντελεστές</span>
<span class="t" style="left:963.5px;top:6.84px;font-size:12px;color:#1e395b;letter-spacing:0.150px;">Εκτυπώσεις</span>
<span class="t" style="left:1058.25px;top:6.84px;font-size:12px;color:#1e395b;letter-spacing:0.109px;">Βοήθεια</span>
<span class="t" style="left:1700px;top:6.84px;font-size:12px;color:#1e395b;letter-spacing:0.037px;">έκδοση=6.3.2 Πλήρης</span>
<span class="t" style="left:1824.5px;top:6.84px;font-size:12px;color:#1e395b;letter-spacing:-0.049px;">Εμφάνιση</span>
<span class="t" style="left:10.6px;top:68.14px;font-size:12px;color:#1e395b;letter-spacing:0.314px;"><u>Ά</u>νοιγμα</span>
<span class="t" style="left:11px;top:82.84px;font-size:12px;color:#1e395b;letter-spacing:-0.346px;">Έργου ...</span>
<span class="t" style="left:61.2px;top:68.14px;font-size:12px;color:#1e395b;letter-spacing:0.307px;"><u>Κ</u>αταχώρηση</span>
<span class="t" style="left:80.4px;top:82.84px;font-size:12px;color:#1e395b;letter-spacing:-0.317px;">Έργου</span>
<span class="t" style="left:166.3px;top:42.14px;font-size:12px;color:#1e395b;letter-spacing:-0.194px;"><u>Ν</u>έο Έργο</span>
<span class="t" style="left:166.3px;top:72.34px;font-size:12px;color:#1e395b;letter-spacing:0.102px;">Καταχώρηση <u>Ω</u>ς ...</span>
<span class="t" style="left:143.4px;top:102.84px;font-size:12px;color:#4a6285;letter-spacing:0.161px;">Διαχείριση Αρχείων</span>
<span class="t" style="left:301.3px;top:67.84px;font-size:12px;color:#1e395b;letter-spacing:0.360px;">Παραγωγή</span>
<span class="t" style="left:282.5px;top:82.84px;font-size:12px;color:#1e395b;letter-spacing:-0.263px;">Αρχείου <u>Τ</u>ΕΕ xml ...</span>
<span class="t" style="left:394.2px;top:67.84px;font-size:12px;color:#1e395b;letter-spacing:0.116px;">Εκτύπωση</span>
<span class="t" style="left:419.7px;top:82.84px;font-size:12px;color:#1e395b;letter-spacing:-0.572px;">...</span>
<span class="t" style="left:457.3px;top:67.84px;font-size:12px;color:#1e395b;letter-spacing:0.096px;">Προεπισκόπιση</span>
<span class="t" style="left:467.3px;top:82.84px;font-size:12px;color:#1e395b;letter-spacing:0.227px;">Εκτύπωσης</span>
<span class="t" style="left:574.2px;top:57.64px;font-size:12px;color:#1e395b;letter-spacing:-0.052px;">Ρυθμίσεις ...</span>
<span class="t" style="left:485.5px;top:102.54px;font-size:12px;color:#4a6285;letter-spacing:0.170px;">Εκτυπώσεις</span>
<span class="t" style="left:4.5px;top:132.15px;font-size:14px;color:#15284b;font-weight:700;letter-spacing:0.431px;">[Τοπογραφικά Μόνο]</span>
<span class="t" style="left:195px;top:132.15px;font-size:14px;color:#15284b;font-weight:700;letter-spacing:-0.013px;">ΕΤΑ=45.00 € | 118.00 €</span>
<span class="t" style="left:386.25px;top:132.15px;font-size:14px;color:#15284b;font-weight:700;letter-spacing:0.112px;">ΚΗ ΥΔΟΜ=75.0%</span>
<span class="t" style="left:543.25px;top:132.15px;font-size:14px;color:#15284b;font-weight:700;letter-spacing:-0.097px;">ΚΗ δήμου=0.0%</span>
<span class="t" style="left:691.75px;top:132.15px;font-size:14px;color:#15284b;font-weight:700;letter-spacing:0.250px;">λ=0.23368 €</span>
<span class="t" style="left:15px;top:170.84px;font-size:12px;color:#1e395b;letter-spacing:0.031px;">Υπολογισμός Αμοιβών για Έργο με Τοπογραφικές Εργασίες ΜΟΝΟ</span>
<span class="t" style="left:387.5px;top:170.84px;font-size:12px;color:#2c2c0c;letter-spacing:0.240px;">Μηχανικών - Νόμιμες &amp; Συμβατικές</span>
<span class="t" style="left:574px;top:207.50px;font-size:15px;color:#2222d0;letter-spacing:0.227px;">Νόμιμες &amp; Συμβατικές Αμοιβές Μελέτης &amp; Επίβλεψης ανά Μηχανικό</span>
<span class="t" style="left:31.75px;top:264.59px;font-size:12px;color:#1a1af8;letter-spacing:0.677px;">α/α</span>
<span class="t" style="left:152.5px;top:264.59px;font-size:12px;color:#1a1af8;letter-spacing:0.249px;">Ονοματεπώνυμο Μηχανικού</span>
<span class="t" style="left:431px;top:243.84px;font-size:12px;color:#1a1af8;letter-spacing:0.258px;">Οδοιπορικά</span>
<span class="t" style="left:442.5px;top:273.84px;font-size:12px;color:#1a1af8;letter-spacing:-0.461px;">(2000·λ)</span>
<span class="t" style="left:586.8px;top:231.84px;font-size:12px;color:#1a1af8;">Αμοιβή Μελέτης (ΦΕΜ 10%)</span>
<span class="t" style="left:839px;top:231.84px;font-size:12px;color:#1a1af8;letter-spacing:0.091px;">Αμοιβή Τοπογραφικού (ΦΕΜ 4%)</span>
<span class="t" style="left:1114px;top:231.84px;font-size:12px;color:#1a1af8;letter-spacing:-0.140px;">Αμοιβή Επίβλεψης (ΦΕΜ 10%)</span>
<span class="t" style="left:1415px;top:231.84px;font-size:12px;color:#1a1af8;letter-spacing:0.277px;">Σύνολο Αμοιβών</span>
<span class="t" style="left:576px;top:265.34px;font-size:12px;color:#1a1af8;letter-spacing:0.414px;">Νόμιμη</span>
<span class="t" style="left:700.4px;top:265.34px;font-size:12px;color:#1a1af8;letter-spacing:0.308px;">Συμβατική</span>
<span class="t" style="left:842px;top:265.34px;font-size:12px;color:#1a1af8;letter-spacing:0.414px;">Νόμιμη</span>
<span class="t" style="left:966.4px;top:265.34px;font-size:12px;color:#1a1af8;letter-spacing:0.308px;">Συμβατική</span>
<span class="t" style="left:1108px;top:265.34px;font-size:12px;color:#1a1af8;letter-spacing:0.414px;">Νόμιμη</span>
<span class="t" style="left:1232.4px;top:265.34px;font-size:12px;color:#1a1af8;letter-spacing:0.308px;">Συμβατική</span>
<span class="t" style="left:1374px;top:265.34px;font-size:12px;color:#1a1af8;letter-spacing:0.414px;">Νόμιμη</span>
<span class="t" style="left:1498.4px;top:265.34px;font-size:12px;color:#1a1af8;letter-spacing:0.308px;">Συμβατική</span>
<span class="t" style="left:992px;top:296.64px;font-size:12px;color:#1a1af8;">€</span>
<span class="t" style="left:37.3px;top:322.84px;font-size:12px;color:#000;">1</span>
<span class="t" style="left:36.8px;top:346.84px;font-size:12px;color:#000;">2</span>
<span class="t" style="left:65.5px;top:322.14px;font-size:12px;color:#000;letter-spacing:-0.518px;">ΚΑΛΕΡΓΗΣ ΗΛΙΑΣ</span>
<span class="t" style="left:65px;top:346.54px;font-size:12px;color:#000;font-weight:700;letter-spacing:-0.119px;">Σ Υ Ν Ο Λ Ο</span>
<span class="t" style="left:890px;top:321.84px;font-size:12px;color:#000;letter-spacing:-0.401px;">303.78</span>
<span class="t" style="left:1023px;top:321.84px;font-size:12px;color:#000;letter-spacing:-0.451px;">303.78</span>
<span class="t" style="left:1422px;top:321.84px;font-size:12px;color:#000;letter-spacing:-0.401px;">303.78</span>
<span class="t" style="left:1551px;top:321.84px;font-size:12px;color:#000;font-weight:700;letter-spacing:0.383px;">303.78</span>
<span class="t" style="left:1018.7px;top:346.84px;font-size:12px;color:#22c040;font-weight:700;letter-spacing:0.383px;">303.78</span>
<span class="t" style="left:1551px;top:346.84px;font-size:12px;color:#22c040;font-weight:700;letter-spacing:0.383px;">303.78</span>
<span class="t" style="left:14.6px;top:1001.62px;font-size:11.5px;color:#1f3a6e;letter-spacing:0.083px;">Στον πίνακα βλέπετε τις αμοιβές μελέτης </span>
<span class="t" style="left:226.8px;top:1001.62px;font-size:11.5px;color:#1f3a6e;letter-spacing:-0.054px;">και επίβλεψης και </span>
<span class="t" style="left:318.3px;top:1001.62px;font-size:11.5px;color:#1f3a6e;letter-spacing:-0.061px;">το σύνολο των αμοιβών </span>
<span class="t" style="left:440.5px;top:1001.62px;font-size:11.5px;color:#1f3a6e;letter-spacing:0.248px;">για κάθε μηχανικό </span>
<span class="t" style="left:539px;top:1001.62px;font-size:11.5px;color:#1f3a6e;letter-spacing:-0.240px;">που συμμετέχει </span>
<span class="t" style="left:617.4px;top:1001.62px;font-size:11.5px;color:#1f3a6e;letter-spacing:0.112px;">στο έργο. </span>
<span class="t" style="left:669.8px;top:1001.62px;font-size:11.5px;color:#1f3a6e;letter-spacing:0.036px;">Μπορείτε να στρογγυλοποιήσετε </span>
<span class="t" style="left:839.7px;top:1001.62px;font-size:11.5px;color:#1f3a6e;letter-spacing:-0.081px;">τα ποσά, </span>
<span class="t" style="left:887.5px;top:1001.62px;font-size:11.5px;color:#1f3a6e;letter-spacing:0.260px;">δίνοντας στις </span>
<span class="t" style="left:960.7px;top:1001.62px;font-size:11.5px;color:#1f3a6e;letter-spacing:0.317px;">σχετικές στήλες </span>
<span class="t" style="left:1048.4px;top:1001.62px;font-size:11.5px;color:#1f3a6e;letter-spacing:-0.054px;">το τελικό ποσό </span>
<span class="t" style="left:1125.6px;top:1001.62px;font-size:11.5px;color:#1f3a6e;letter-spacing:-0.054px;">των αμοιβών μελέτης </span>
<span class="t" style="left:1235.9px;top:1001.62px;font-size:11.5px;color:#1f3a6e;letter-spacing:-0.034px;">και επίβλεψης κάθε </span>
<span class="t" style="left:1336.7px;top:1001.62px;font-size:11.5px;color:#1f3a6e;letter-spacing:-0.026px;">μηχανικού. Σε κάθε </span>
<span class="t" style="left:1437px;top:1001.62px;font-size:11.5px;color:#1f3a6e;letter-spacing:-0.158px;">περίπτωση, δώστε </span>
<span class="t" style="left:1533px;top:1001.62px;font-size:11.5px;color:#1f3a6e;letter-spacing:-0.336px;">το ποσό που</span>
<span class="t" style="left:14.6px;top:1014.82px;font-size:11.5px;color:#1f3a6e;letter-spacing:0.185px;">θα αναγράφεται στο Δ.Π.Υ. </span>
<span class="t" style="left:158.4px;top:1014.82px;font-size:11.5px;color:#1f3a6e;letter-spacing:-0.085px;">κάθε μηχανικού </span>
<span class="t" style="left:239.3px;top:1014.82px;font-size:11.5px;color:#1f3a6e;letter-spacing:0.050px;">ώστε να υπάρχει </span>
<span class="t" style="left:328.8px;top:1014.82px;font-size:11.5px;color:#1f3a6e;letter-spacing:0.192px;">συνέπεια στα σχετικά </span>
<span class="t" style="left:444.7px;top:1014.82px;font-size:11.5px;color:#1f3a6e;letter-spacing:0.139px;">έντυπα </span>
<span class="t" style="left:485px;top:1014.82px;font-size:11.5px;color:#1f3a6e;letter-spacing:-0.659px;">(ΦΕΜ, </span>
<span class="t" style="left:517.7px;top:1014.82px;font-size:11.5px;color:#1f3a6e;letter-spacing:-0.977px;">ΤΣΜΕΔΕ </span>
<span class="t" style="left:560.8px;top:1014.82px;font-size:11.5px;color:#1f3a6e;letter-spacing:-0.666px;">κλπ)</span>
<span class="t" style="left:1625px;top:133.64px;font-size:12px;color:#3b3b3b;letter-spacing:0.426px;">Τοπογραφικά</span>
<span class="t" style="left:1637px;top:165.24px;font-size:12px;color:#1f3a8a;font-weight:700;letter-spacing:0.118px;">Σελίδες Δεδομένων:</span>
<span class="t" style="left:1658.4px;top:183.84px;font-size:12px;color:#111;letter-spacing:0.010px;">Εργασιών</span>
<span class="t" style="left:1658.4px;top:203.54px;font-size:12px;color:#111;letter-spacing:0.391px;">Μηχανικών</span>
<span class="t" style="left:1653.4px;top:859.15px;font-size:11.7px;color:#1e395b;font-weight:700;letter-spacing:-0.311px;">Έργο</span>
<span class="t" style="left:1653.4px;top:890.15px;font-size:11.7px;color:#1e395b;font-weight:700;letter-spacing:0.175px;">Προϋπολογισμοί</span>
<span class="t" style="left:1653.4px;top:921.15px;font-size:11.7px;color:#1e395b;font-weight:700;letter-spacing:0.304px;">Αμοιβές</span>
<span class="t" style="left:1653.4px;top:951.95px;font-size:11.7px;color:#0a1730;font-weight:700;letter-spacing:0.356px;">Τοπογραφικά</span>
<span class="t" style="left:1653.4px;top:982.95px;font-size:11.7px;color:#1e395b;font-weight:700;letter-spacing:-0.379px;">TEE online</span>
<span class="t" style="left:1653.4px;top:1013.95px;font-size:11.7px;color:#1e395b;font-weight:700;letter-spacing:-0.066px;">Εισφορές</span>
<span class="t" style="left:1653.4px;top:1044.95px;font-size:11.7px;color:#1e395b;font-weight:700;letter-spacing:0.605px;">Αυθαίρετα</span>
</div>
</body></html>
